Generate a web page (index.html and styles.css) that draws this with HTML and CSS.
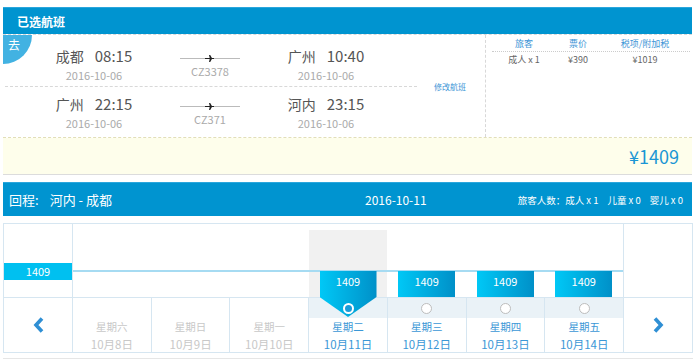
FILE: index.html
```html
<!DOCTYPE html>
<html lang="zh-CN">
<head>
    <meta charset="UTF-8">
    <title>选择回程航班</title>
    <link rel="stylesheet" href="styles.css">
</head>
<body>
    <!-- 已选航班 -->
    <section class="selected">
        <h2 class="panel-hd">已选航班</h2>
        <div class="panel-bd">
            <div class="trips">
                <span class="badge">去</span>
                <div class="flights">
                    <div class="flight">
                        <div class="point">
                            <p class="place"><span class="city">成都</span><span class="time">08:15</span></p>
                            <p class="date">2016-10-06</p>
                        </div>
                        <div class="route">
                            <div class="route-line">
                                <svg width="9" height="7" viewBox="0 0 9 7"><path d="M0 3h9v1H0z M4 0h1.2l2 3.5-2 3.5H4l0.8-3.5z" fill="#222"/></svg>
                            </div>
                            <p class="no">CZ3378</p>
                        </div>
                        <div class="point">
                            <p class="place"><span class="city">广州</span><span class="time">10:40</span></p>
                            <p class="date">2016-10-06</p>
                        </div>
                    </div>
                    <div class="flight">
                        <div class="point">
                            <p class="place"><span class="city">广州</span><span class="time">22:15</span></p>
                            <p class="date">2016-10-06</p>
                        </div>
                        <div class="route">
                            <div class="route-line">
                                <svg width="9" height="7" viewBox="0 0 9 7"><path d="M0 3h9v1H0z M4 0h1.2l2 3.5-2 3.5H4l0.8-3.5z" fill="#222"/></svg>
                            </div>
                            <p class="no">CZ371</p>
                        </div>
                        <div class="point">
                            <p class="place"><span class="city">河内</span><span class="time">23:15</span></p>
                            <p class="date">2016-10-06</p>
                        </div>
                    </div>
                </div>
                <div class="modify"><a href="#">修改航班</a></div>
            </div>
            <div class="price">
                <div class="price-row price-head"><span>旅客</span><span>票价</span><span>税项/附加税</span></div>
                <div class="price-row"><span>成人 x 1</span><span>¥390</span><span>¥1019</span></div>
            </div>
        </div>
        <div class="total">¥1409</div>
    </section>

    <!-- 回程 -->
    <div class="return-hd">
        <div class="return-route">回程:<span>河内 - 成都</span></div>
        <div class="return-date">2016-10-11</div>
        <div class="pax">旅客人数：成人 x 1<span>儿童 x 0</span><span>婴儿 x 0</span></div>
    </div>

    <!-- 低价日历 -->
    <div class="cal">
        <div class="cal-top">
            <div class="cal-side"><span class="low">1409</span></div>
            <div class="cal-chart">
                <div class="col"></div>
                <div class="col"></div>
                <div class="col"></div>
                <div class="col on"><span class="bar pick">1409</span></div>
                <div class="col"><span class="bar">1409</span></div>
                <div class="col"><span class="bar">1409</span></div>
                <div class="col"><span class="bar">1409</span></div>
            </div>
            <div class="cal-side right"></div>
        </div>
        <div class="cal-bottom">
            <div class="cal-side arrow">
                <svg width="11" height="16" viewBox="0 0 11 16"><polyline points="9,1.5 3,8 9,14.5" fill="none" stroke="#2f8fd4" stroke-width="3.6"/></svg>
            </div>
            <div class="day off"><div class="band"></div><p class="wk">星期六</p><p class="dt">10月8日</p></div>
            <div class="day off"><div class="band"></div><p class="wk">星期日</p><p class="dt">10月9日</p></div>
            <div class="day off"><div class="band"></div><p class="wk">星期一</p><p class="dt">10月10日</p></div>
            <div class="day"><div class="band has"><i class="radio checked"></i></div><p class="wk">星期二</p><p class="dt">10月11日</p></div>
            <div class="day"><div class="band has"><i class="radio"></i></div><p class="wk">星期三</p><p class="dt">10月12日</p></div>
            <div class="day"><div class="band has"><i class="radio"></i></div><p class="wk">星期四</p><p class="dt">10月13日</p></div>
            <div class="day"><div class="band has"><i class="radio"></i></div><p class="wk">星期五</p><p class="dt">10月14日</p></div>
            <div class="cal-side right arrow">
                <svg width="11" height="16" viewBox="0 0 11 16"><polyline points="2,1.5 8,8 2,14.5" fill="none" stroke="#2f8fd4" stroke-width="3.6"/></svg>
            </div>
        </div>
    </div>
    <div class="foot"></div>
</body>
</html>
```

FILE: styles.css
```css
/* 全局样式 */
* { box-sizing: border-box; }
html, body {
    margin: 0;
    padding: 0;
    font-family: "Noto Sans CJK SC", sans-serif;
    font-size: 12px;
    color: #555;
    background-color: #fff;
}
body {
    padding: 7px 0 0 3px;
}
p, h2 {
    margin: 0;
}
a {
    text-decoration: none;
}

/* 已选航班 */
.selected {
    width: 689px;
}
.panel-hd {
    height: 27px;
    line-height: 27px;
    padding-left: 14px;
    background-color: #0094d0;
    border-top: 1px solid #2aa6dc;
    color: #fff;
    font-size: 12px;
    font-weight: bold;
}
.panel-bd {
    display: flex;
    height: 104px;
    border-top: 1px dashed #d8d8d8;
    border-bottom: 1px dashed #e2dfb8;
}
.trips {
    position: relative;
    display: flex;
    width: 483px;
    border-right: 1px dashed #d8d8d8;
}
.badge {
    position: absolute;
    top: 0;
    left: 0;
    width: 29px;
    height: 29px;
    padding: 3px 0 0 5px;
    line-height: 14px;
    background-color: #42b2e2;
    border-bottom-right-radius: 29px;
    color: #fff;
    font-size: 12px;
}
.flights {
    width: 412px;
    padding-top: 4px;
    margin-left: 2px;
}
.flight {
    display: grid;
    grid-template-columns: 116px 116px 116px;
    padding: 8px 0 3px 31px;
}
.flight + .flight {
    border-top: 1px dashed #d8d8d8;
}
.point {
    text-align: center;
}
.place {
    height: 18px;
    line-height: 18px;
}
.city {
    font-size: 14px;
    margin-right: 11px;
}
.time {
    font-size: 15px;
}
.date {
    margin-top: 2px;
    line-height: 16px;
    font-size: 11px;
    color: #aaa;
}
.route {
    text-align: center;
}
.route-line {
    display: flex;
    align-items: center;
    justify-content: center;
    width: 60px;
    height: 18px;
    margin: 2px auto 0;
    background: linear-gradient(#bbb, #bbb) left center / 100% 1px no-repeat;
}
.route-line svg {
    display: block;
    margin-left: -2px;
}
.no {
    margin-top: -3px;
    line-height: 14px;
    font-size: 11px;
    color: #aaa;
}
.modify {
    display: flex;
    align-items: center;
    padding-left: 17px;
}
.modify a {
    font-size: 8px;
    color: #3c95d6;
}

/* 价格 */
.price {
    flex: 1;
    padding: 2px 0 0 6px;
}
.price-row {
    display: grid;
    grid-template-columns: 64px 44px 90px;
    width: 198px;
    line-height: 14px;
    font-size: 9px;
    text-align: center;
    color: #666;
}
.price-head {
    color: #3c95d6;
    border-bottom: 1px dotted #ccc;
}
.price-row + .price-row {
    margin-top: 1px;
}
.total {
    height: 37px;
    line-height: 36px;
    padding-right: 13px;
    background-color: #fefeeb;
    border-bottom: 1px solid #dcdcdc;
    text-align: right;
    font-size: 18px;
    color: #1a96d4;
}

/* 回程 */
.return-hd {
    display: flex;
    align-items: center;
    width: 689px;
    height: 34px;
    margin-top: 7px;
    padding: 0 9px 0 6px;
    background-color: #0094d0;
    border-top: 1px solid #2aa6dc;
    color: #fff;
}
.return-route {
    width: 356px;
    font-size: 13px;
}
.return-route span {
    margin-left: 11px;
}
.return-date {
    font-size: 12px;
}
.pax {
    margin-left: auto;
    font-size: 9.5px;
}
.pax span {
    margin-left: 9px;
}

/* 日历 */
.cal {
    width: 690px;
    margin-top: 7px;
    border: 1px solid #d6e6f1;
}
.cal-top {
    display: flex;
    height: 74px;
    border-bottom: 1px solid #d6e6f1;
}
.cal-side {
    flex: 0 0 69px;
    border-right: 1px solid #d6e6f1;
}
.cal-side.right {
    border-right: 0;
    border-left: 1px solid #d6e6f1;
}
.low {
    display: block;
    height: 17px;
    margin-top: 39px;
    line-height: 17px;
    background-color: #00c0f0;
    text-align: center;
    font-size: 11px;
    color: #fff;
}
.cal-chart {
    position: relative;
    display: flex;
    flex: 1;
}
.cal-chart::before {
    content: "";
    position: absolute;
    top: 46px;
    left: 0;
    right: 0;
    height: 2px;
    background-color: #a6dbf2;
    z-index: 1;
}
.col {
    flex: 1 1 0;
    display: flex;
    flex-direction: column;
    justify-content: flex-end;
    align-items: center;
}
.col.on {
    padding-top: 6px;
    background-color: #f1f1f1;
    background-clip: content-box;
}
.bar {
    position: relative;
    z-index: 2;
    display: block;
    width: 57px;
    height: 26px;
    padding-top: 2px;
    line-height: 16px;
    background: linear-gradient(to right, #00c8f6, #0090c8);
    text-align: center;
    font-size: 11px;
    color: #fff;
}
.bar.pick {
    height: 46px;
    margin-bottom: -20px;
    clip-path: polygon(0 0, 100% 0, 100% 26px, 50% 100%, 0 26px);
}
.cal-bottom {
    display: flex;
    height: 54px;
}
.arrow {
    display: flex;
    align-items: center;
    justify-content: center;
}
.day {
    flex: 1 1 0;
    border-right: 1px solid #d6e6f1;
    text-align: center;
    color: #3b97d6;
}
.day:nth-child(8) {
    border-right: 0;
}
.day.off {
    color: #c8c8c8;
}
.band {
    display: flex;
    align-items: center;
    justify-content: center;
    height: 20px;
}
.band.has {
    background-color: #eaf2f7;
}
.radio {
    position: relative;
    z-index: 3;
    width: 11px;
    height: 11px;
    border: 1px solid #bdbdbd;
    border-radius: 50%;
    background-color: #fff;
}
.radio.checked {
    border: 2px solid #fff;
    background-color: #1b9bd8;
}
.wk {
    margin-top: 2px;
    line-height: 14px;
    font-size: 10.5px;
}
.dt {
    margin-top: 3px;
    line-height: 14px;
    font-size: 11.5px;
}
.foot {
    width: 690px;
    height: 1px;
    margin-top: 5px;
    background-color: #e6e6e6;
}
```
